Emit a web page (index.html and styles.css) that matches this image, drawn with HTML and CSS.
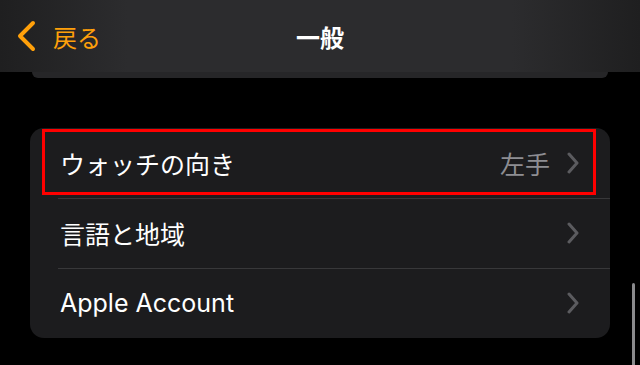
FILE: index.html
```html
<!DOCTYPE html>
<html lang="ja">
<head>
    <meta charset="UTF-8">
    <meta name="viewport" content="width=device-width, initial-scale=1.0">
    <title>一般</title>
    <link rel="stylesheet" href="styles.css">
</head>
<body>
    <div class="navbar">
        <div class="back">
            <svg class="back-icon" width="24" height="32" viewBox="0 0 24 32">
                <path d="M18 3 L5 16 L18 29" fill="none" stroke="#ffa00a" stroke-width="4" stroke-linecap="round" stroke-linejoin="round"/>
            </svg>
            <span class="back-text">戻る</span>
        </div>
        <div class="title">一般</div>
    </div>
    <div class="prev-card"></div>

    <div class="card">
        <div class="row selected">
            <span class="label">ウォッチの向き</span>
            <span class="value">左手</span>
            <svg class="chev" width="14" height="22" viewBox="0 0 14 22"><path d="M3 2 L11 11 L3 20" fill="none" stroke="#5b5b5f" stroke-width="3" stroke-linecap="round" stroke-linejoin="round"/></svg>
        </div>
        <div class="row">
            <span class="label">言語と地域</span>
            <svg class="chev" width="14" height="22" viewBox="0 0 14 22"><path d="M3 2 L11 11 L3 20" fill="none" stroke="#5b5b5f" stroke-width="3" stroke-linecap="round" stroke-linejoin="round"/></svg>
        </div>
        <div class="row">
            <span class="label latin">Apple Account</span>
            <svg class="chev" width="14" height="22" viewBox="0 0 14 22"><path d="M3 2 L11 11 L3 20" fill="none" stroke="#5b5b5f" stroke-width="3" stroke-linecap="round" stroke-linejoin="round"/></svg>
        </div>
    </div>

    <div class="scrollbar"></div>
</body>
</html>
```
FILE: styles.css
```css
body {
    margin: 0;
    width: 640px;
    height: 365px;
    overflow: hidden;
    background-color: #000;
    font-family: "Noto Sans CJK JP", sans-serif;
    color: #fff;
    position: relative;
}

.navbar {
    height: 72px;
    background: linear-gradient(90deg, #1f1f20 0%, #2c2c2e 20%, #2c2c2e 80%, #1f1f20 100%);
    display: flex;
    align-items: center;
    position: relative;
}

.back {
    display: flex;
    align-items: center;
    padding-left: 15px;
    color: #ffa00a;
}

.back-icon {
    margin-right: 14px;
}

.back-text {
    font-size: 24px;
}

.title {
    position: absolute;
    left: 0;
    right: 0;
    text-align: center;
    font-size: 24px;
    font-weight: 700;
}

.prev-card {
    height: 6px;
    margin: 0 32px;
    background-color: #262628;
    border-radius: 0 0 10px 10px;
}

.card {
    margin: 50px 30px 0 30px;
    background-color: #1c1c1e;
    border-radius: 14px;
    overflow: hidden;
}

.row {
    height: 70px;
    display: flex;
    align-items: center;
    padding: 0 30px;
    position: relative;
}

.row + .row::before {
    content: "";
    position: absolute;
    top: 0;
    left: 28px;
    right: 0;
    height: 1px;
    background-color: #38383a;
}

.label {
    flex: 1;
    font-size: 25px;
}

.latin {
    font-family: Inter, sans-serif;
    font-size: 25px;
}

.value {
    font-size: 25px;
    color: #8e8e93;
    margin-right: 16px;
}

.selected::after {
    content: "";
    position: absolute;
    left: 12px;
    right: 14px;
    top: 1px;
    bottom: 3px;
    border: 3px solid #ff0000;
}

.scrollbar {
    position: absolute;
    left: 632px;
    top: 283px;
    width: 3px;
    height: 90px;
    border-radius: 2px;
    background-color: #8a8a8c;
}
```
